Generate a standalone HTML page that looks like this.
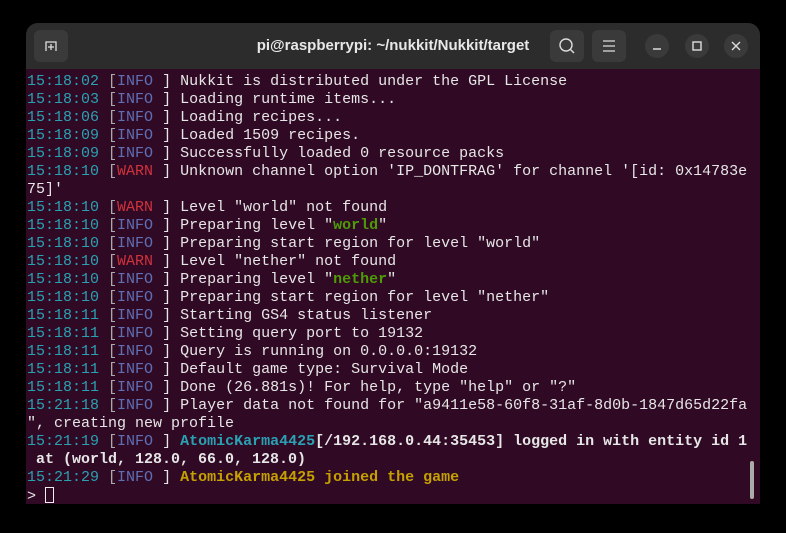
<!DOCTYPE html><html><head><style>
body{margin:0;background:#000;width:786px;height:533px;overflow:hidden;font-family:"Liberation Sans",sans-serif}
.win{position:absolute;left:26px;top:23px;width:734px;height:481px;background:#300a24;border-radius:12px 12px 0 0;overflow:hidden}
.tb{position:absolute;left:0;top:0;width:734px;height:46px;background:#2c2c2c}
.title{position:absolute;left:0;width:734px;top:14px;text-align:center;color:#e8e8e8;font-weight:bold;font-size:15px}
.btn{position:absolute;top:7px;width:34px;height:32px;background:#3a3a3a;border-radius:6px}
.cb{position:absolute;top:11px;width:24px;height:24px;background:#3a3a3a;border-radius:50%}
pre{position:absolute;left:1px;top:50px;margin:0;font-family:"Liberation Mono",monospace;font-size:15px;line-height:18px;color:#e6e6e6;white-space:pre}
.t{color:#2aa1b3}.i{color:#5f6fb5}.w{color:#d0313d}.b{color:#aaa}
.g{color:#4e9a06;font-weight:bold}.y{color:#c4a000;font-weight:bold}.c{color:#2aa1b3;font-weight:bold}.wb{font-weight:bold}
.sb{position:absolute;left:724px;top:438px;width:4px;height:38px;background:#aaa;border-radius:2px}
.cur{display:inline-block;width:9px;height:16px;border:1px solid #eee;box-sizing:border-box;vertical-align:-3px}
</style></head><body><div class="win">
<div class="tb">
<div class="btn" style="left:8px"><svg width="34" height="32"><path d="M12 21V12h10v9M17 14v6M14 17h6" stroke="#ddd" fill="none" stroke-width="1.3"/></svg></div>
<div class="title">pi@raspberrypi: ~/nukkit/Nukkit/target</div>
<div class="btn" style="left:524px"><svg width="34" height="32"><circle cx="16" cy="15" r="6" stroke="#ddd" fill="none" stroke-width="1.4"/><path d="M20 19l4 4" stroke="#ddd" stroke-width="1.4"/></svg></div>
<div class="btn" style="left:566px"><svg width="34" height="32"><path d="M11 11h12M11 16h12M11 21h12" stroke="#ddd" stroke-width="1.3"/></svg></div>
<div class="cb" style="left:619px"><svg width="24" height="24"><path d="M8 15h8" stroke="#ddd" stroke-width="1.4"/></svg></div>
<div class="cb" style="left:659px"><svg width="24" height="24"><rect x="8" y="8" width="8" height="8" stroke="#ddd" fill="none" stroke-width="1.4"/></svg></div>
<div class="cb" style="left:698px"><svg width="24" height="24"><path d="M8 8l8 8M16 8l-8 8" stroke="#ddd" stroke-width="1.4"/></svg></div>
</div>
<pre><span class="t">15:18:02</span> <span class="b">[</span><span class="i">INFO</span> ] Nukkit is distributed under the GPL License
<span class="t">15:18:03</span> <span class="b">[</span><span class="i">INFO</span> ] Loading runtime items...
<span class="t">15:18:06</span> <span class="b">[</span><span class="i">INFO</span> ] Loading recipes...
<span class="t">15:18:09</span> <span class="b">[</span><span class="i">INFO</span> ] Loaded 1509 recipes.
<span class="t">15:18:09</span> <span class="b">[</span><span class="i">INFO</span> ] Successfully loaded 0 resource packs
<span class="t">15:18:10</span> <span class="b">[</span><span class="w">WARN</span> ] Unknown channel option 'IP_DONTFRAG' for channel '[id: 0x14783e
75]'
<span class="t">15:18:10</span> <span class="b">[</span><span class="w">WARN</span> ] Level "world" not found
<span class="t">15:18:10</span> <span class="b">[</span><span class="i">INFO</span> ] Preparing level "<span class="g">world</span>"
<span class="t">15:18:10</span> <span class="b">[</span><span class="i">INFO</span> ] Preparing start region for level "world"
<span class="t">15:18:10</span> <span class="b">[</span><span class="w">WARN</span> ] Level "nether" not found
<span class="t">15:18:10</span> <span class="b">[</span><span class="i">INFO</span> ] Preparing level "<span class="g">nether</span>"
<span class="t">15:18:10</span> <span class="b">[</span><span class="i">INFO</span> ] Preparing start region for level "nether"
<span class="t">15:18:11</span> <span class="b">[</span><span class="i">INFO</span> ] Starting GS4 status listener
<span class="t">15:18:11</span> <span class="b">[</span><span class="i">INFO</span> ] Setting query port to 19132
<span class="t">15:18:11</span> <span class="b">[</span><span class="i">INFO</span> ] Query is running on 0.0.0.0:19132
<span class="t">15:18:11</span> <span class="b">[</span><span class="i">INFO</span> ] Default game type: Survival Mode
<span class="t">15:18:11</span> <span class="b">[</span><span class="i">INFO</span> ] Done (26.881s)! For help, type "help" or "?"
<span class="t">15:21:18</span> <span class="b">[</span><span class="i">INFO</span> ] Player data not found for "a9411e58-60f8-31af-8d0b-1847d65d22fa
", creating new profile
<span class="t">15:21:19</span> <span class="b">[</span><span class="i">INFO</span> ] <span class="c">AtomicKarma4425</span><span class="wb">[/192.168.0.44:35453] logged in with entity id 1
 at (world, 128.0, 66.0, 128.0)</span>
<span class="t">15:21:29</span> <span class="b">[</span><span class="i">INFO</span> ] <span class="y">AtomicKarma4425 joined the game</span>
&gt; <span class="cur"></span></pre>
<div class="sb"></div>
</div></body></html>
